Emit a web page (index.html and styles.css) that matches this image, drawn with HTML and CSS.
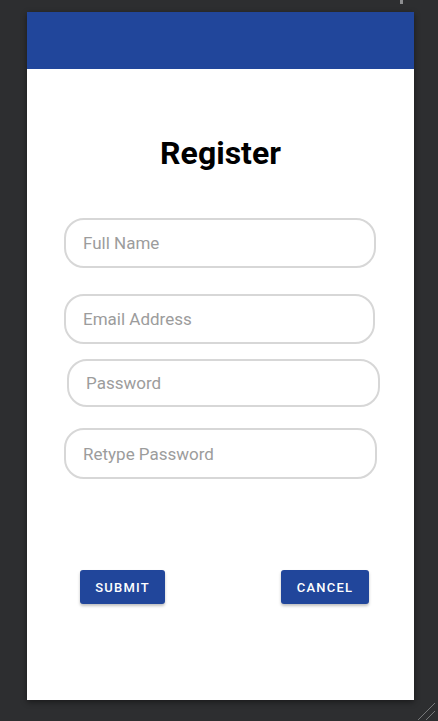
FILE: index.html
```html
<!DOCTYPE html>
<html lang="en">
<head>
  <meta charset="UTF-8">
  <meta name="viewport" content="width=device-width, initial-scale=1.0">
  <title>Register</title>
  <link rel="stylesheet" href="styles.css">
</head>
<body>
  <div class="notch"></div>
  <div class="device">
    <div class="appbar"></div>
    <form class="register">
      <h1>Register</h1>
      <div class="fields">
        <input type="text" class="field" placeholder="Full Name">
        <input type="email" class="field field-email" placeholder="Email Address">
        <input type="password" class="field field-pass" placeholder="Password">
        <input type="password" class="field field-retype" placeholder="Retype Password">
      </div>
      <div class="actions">
        <button type="submit" class="btn btn-submit">Submit</button>
        <button type="button" class="btn btn-cancel">Cancel</button>
      </div>
    </form>
  </div>
  <svg class="grip" width="20" height="20" viewBox="0 0 20 20">
    <line x1="2" y1="19" x2="19" y2="2" stroke="#77787a" stroke-width="1"/>
    <line x1="10" y1="19" x2="19" y2="10" stroke="#77787a" stroke-width="1"/>
  </svg>
</body>
</html>
```

FILE: styles.css
```css
html, body {
  margin: 0;
  height: 721px;
  overflow: hidden;
}
body {
  background: #2d2e30;
  font-family: Roboto, "Noto Sans", sans-serif;
  position: relative;
}
.notch {
  position: absolute;
  top: 0;
  left: 400px;
  width: 3px;
  height: 4px;
  background: #8d8e90;
}
.device {
  margin: 12px 0 0 27px;
  width: 387px;
  height: 688px;
  background: #ffffff;
  box-shadow: 0 2px 6px rgba(0, 0, 0, 0.45);
  display: flex;
  flex-direction: column;
}
.appbar {
  height: 57px;
  background: #21469b;
}
.register {
  display: flex;
  flex-direction: column;
}
.register h1 {
  margin: 65px 0 0;
  font-size: 32px;
  line-height: 38px;
  font-weight: 700;
  color: #000;
  text-align: center;
}
.fields {
  display: flex;
  flex-direction: column;
  align-items: flex-start;
  margin-top: 46px;
  padding-left: 37px;
}
.field {
  box-sizing: border-box;
  width: 312px;
  height: 50px;
  border: 2px solid #d7d7d7;
  border-radius: 20px;
  padding: 0 17px;
  font-family: Roboto, sans-serif;
  font-size: 17px;
  color: #333;
  background: #fff;
  outline: none;
}
.field::placeholder {
  color: #9c9c9c;
}
.field-email {
  margin-top: 26px;
  width: 311px;
}
.field-pass {
  margin: 15px 0 0 3px;
  width: 313px;
  height: 48px;
}
.field-retype {
  margin-top: 21px;
  width: 313px;
  height: 51px;
}
.actions {
  display: flex;
  justify-content: space-between;
  margin-top: 91px;
  padding: 0 45px 0 53px;
}
.btn {
  height: 34px;
  border: none;
  border-radius: 3px;
  background: #21469b;
  color: #fff;
  font-family: Roboto, sans-serif;
  font-size: 13px;
  font-weight: 500;
  letter-spacing: 1.2px;
  text-transform: uppercase;
  box-shadow: 0 2px 3px rgba(0, 0, 0, 0.25);
  cursor: pointer;
}
.btn-submit {
  width: 85px;
}
.btn-cancel {
  width: 88px;
}
.grip {
  position: absolute;
  right: 2px;
  bottom: 0;
}
```
